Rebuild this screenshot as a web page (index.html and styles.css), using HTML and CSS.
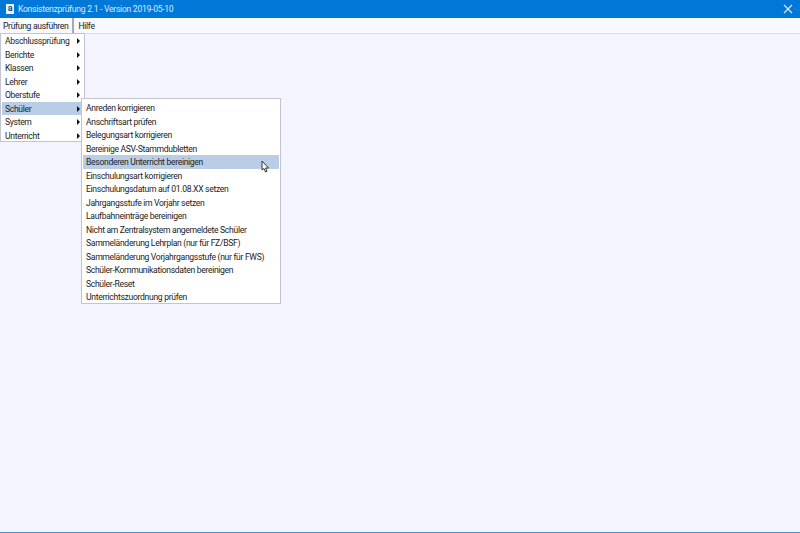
FILE: index.html
```html
<!DOCTYPE html>
<html>
<head>
    <meta charset="utf-8" />
    <title>Konsistenzprüfung 2.1</title>
    <link rel="stylesheet" href="styles.css">
</head>
<body>
    <div class="window">
        <!-- Titelleiste -->
        <div class="titlebar">
            <span class="logo">a</span>
            <span class="title">Konsistenzprüfung 2.1 - Version 2019-05-10</span>
            <svg class="close" width="10" height="10" viewBox="0 0 10 10">
                <path d="M1 1L9 9M9 1L1 9" stroke="#d7e9f8" stroke-width="1.2" fill="none" />
            </svg>
        </div>
        <!-- Menüleiste -->
        <div class="menubar">
            <div class="topitem open">Prüfung ausführen</div>
            <div class="topitem">Hilfe</div>
        </div>
        <div class="content">
            <ul class="menu mainmenu">
                <li>Abschlussprüfung<i class="arrow"></i></li>
                <li>Berichte<i class="arrow"></i></li>
                <li>Klassen<i class="arrow"></i></li>
                <li>Lehrer<i class="arrow"></i></li>
                <li>Oberstufe<i class="arrow"></i></li>
                <li class="active">Schüler<i class="arrow"></i></li>
                <li>System<i class="arrow"></i></li>
                <li>Unterricht<i class="arrow"></i></li>
            </ul>
            <ul class="menu submenu">
                <li>Anreden korrigieren</li>
                <li>Anschriftsart prüfen</li>
                <li>Belegungsart korrigieren</li>
                <li>Bereinige ASV-Stammdubletten</li>
                <li class="active">Besonderen Unterricht bereinigen</li>
                <li>Einschulungsart korrigieren</li>
                <li>Einschulungsdatum auf 01.08.XX setzen</li>
                <li>Jahrgangsstufe im Vorjahr setzen</li>
                <li>Laufbahneinträge bereinigen</li>
                <li>Nicht am Zentralsystem angemeldete Schüler</li>
                <li>Sammeländerung Lehrplan (nur für FZ/BSF)</li>
                <li>Sammeländerung Vorjahrgangsstufe (nur für FWS)</li>
                <li>Schüler-Kommunikationsdaten bereinigen</li>
                <li>Schüler-Reset</li>
                <li>Unterrichtszuordnung prüfen</li>
            </ul>
            <!-- Mauszeiger -->
            <svg class="cursor" width="9" height="13" viewBox="0 0 9 13">
                <path d="M1 1V10L3 8.5L4.5 12L6 11.3L4.6 8H7.5Z" fill="#fff" stroke="#333" stroke-width="1" />
            </svg>
        </div>
    </div>
</body>
</html>
```

FILE: styles.css
```css
/*清除边距*/
html, body, ul, li {
    margin: 0;
    padding: 0;
}
body {
    width: 800px;
    height: 533px;
    overflow: hidden;
    font-family: Roboto, "Noto Sans", sans-serif;
    font-size: 8.6px;
    letter-spacing: -0.32px;
    color: #222;
}
.window {
    height: 533px;
    display: flex;
    flex-direction: column;
    border-bottom: 1px solid #4a90c8;
    box-sizing: border-box;
}
/*Titelleiste*/
.titlebar {
    height: 18px;
    flex: none;
    display: flex;
    align-items: center;
    padding: 0 6px 0 6px;
    background-color: #0078d7;
    color: #d9ecfa;
}
.logo {
    width: 8px;
    height: 10px;
    line-height: 9px;
    margin-right: 4px;
    text-align: center;
    font-size: 9px;
    font-weight: 700;
    background-color: #e8f3fb;
    color: #0b4f8a;
}
.title {
    flex: 1;
    letter-spacing: -0.28px;
}
.close {
    margin-right: 1px;
}
/*Menüleiste*/
.menubar {
    height: 16px;
    flex: none;
    display: flex;
    align-items: center;
    box-sizing: border-box;
    background-color: #f8f8ff;
    border-bottom: 1px solid #dcdce4;
}
.topitem {
    height: 15px;
    line-height: 16px;
    padding: 0 3px;
    margin-right: 1px;
}
.topitem.open {
    padding-right: 3px;
    border-right: 2px solid #a9a9b0;
    margin-right: 2px;
}
.content {
    flex: 1;
    position: relative;
    background-color: #f4f4ff;
}
/*Menüs*/
.menu {
    position: absolute;
    list-style: none;
    box-sizing: border-box;
    background-color: #fff;
    border: 1px solid #c4c4d0;
    padding: 0 1px;
}
.menu li {
    position: relative;
    height: 13.5px;
    line-height: 14.5px;
    padding-left: 3px;
    white-space: nowrap;
}
.menu li.active {
    background-color: #b9cde6;
}
.mainmenu {
    left: 0;
    top: -1px;
    width: 85px;
    height: 109px;
}
.submenu {
    left: 81px;
    top: 64px;
    width: 200px;
    height: 206px;
    padding-top: 2px;
}
.arrow {
    position: absolute;
    right: 3px;
    top: 4px;
    border-left: 3px solid #111;
    border-top: 3px solid transparent;
    border-bottom: 3px solid transparent;
}
.cursor {
    position: absolute;
    left: 261px;
    top: 126px;
}
```
